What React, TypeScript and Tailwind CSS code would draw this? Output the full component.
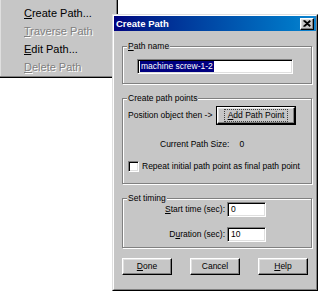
import React from "react"

const raised =
  "border border-t-white border-l-white border-r-black border-b-black shadow-[inset_-1px_-1px_0_#808080,inset_1px_1px_0_#dfdfdf]"
const sunken =
  "border border-t-[#808080] border-l-[#808080] border-r-white border-b-white shadow-[inset_1px_1px_0_#000,inset_-1px_-1px_0_#dfdfdf]"
const etched =
  "relative border border-[#808080] shadow-[inset_1px_1px_0_#fff,1px_1px_0_#fff]"

const MenuItem = ({ hot, rest, disabled }: { hot: string; rest: string; disabled?: boolean }) => (
  <div
    className={
      "h-[18px] pl-[24px] flex items-center text-[11px] leading-none " +
      (disabled ? "text-[#808080] [text-shadow:1px_1px_0_#fff]" : "text-black")
    }
  >
    <span>
      <u className="underline-offset-1">{hot}</u>
      {rest}
    </span>
  </div>
)

const Group = ({
  label,
  className,
  children,
}: {
  label: React.ReactNode
  className: string
  children: React.ReactNode
}) => (
  <div className={etched + " ml-[8px] w-[190px] " + className}>
    <span className="absolute left-[4px] top-[-6px] bg-[#c6c6c6] px-[1px] text-[8.5px] leading-[11px]">
      {label}
    </span>
    {children}
  </div>
)

const Button = ({ children, w }: { children: React.ReactNode; w: string }) => (
  <div className={raised + " h-[17px] flex items-center justify-center text-[8.5px] leading-none bg-[#c6c6c6] " + w}>
    {children}
  </div>
)

export default function App() {
  return (
    <div className="relative w-[318px] h-[291px] bg-white overflow-hidden font-['Liberation_Sans',Arial,sans-serif] text-black">
      {/* popup menu */}
      <div className="absolute left-0 top-0 w-[118px] h-[78px] bg-[#c6c6c6] border-r border-b border-r-black border-b-black shadow-[inset_-1px_-1px_0_#808080,inset_1px_0_0_#dfdfdf] pt-[4px]">
        <MenuItem hot="C" rest="reate Path..." />
        <MenuItem hot="T" rest="raverse Path" disabled />
        <MenuItem hot="E" rest="dit Path..." />
        <MenuItem hot="D" rest="elete Path" disabled />
      </div>

      {/* dialog */}
      <div className="absolute left-[112px] top-[14px] w-[206px] h-[277px] border border-t-[#dfdfdf] border-l-[#dfdfdf] border-r-black border-b-black">
        <div className="h-full bg-[#c6c6c6] border border-t-white border-l-white border-r-[#808080] border-b-[#808080]">
          <div className="h-[15px] flex items-center justify-between pl-[2px] pr-[2px] bg-linear-to-r from-[#000080] to-[#1084d0]">
            <span className="text-white font-bold text-[9.5px] leading-none">Create Path</span>
            <div className={raised + " w-[14px] h-[12px] bg-[#c6c6c6] flex items-center justify-center"}>
              <svg width="8" height="7" viewBox="0 0 8 7">
                <path d="M0.5 0.5 L7 6.5 M1.5 0.5 L7.5 6 M7 0.5 L0.5 6.5 M7.5 1 L1.5 6.5" stroke="#000" strokeWidth="1.1" />
              </svg>
            </div>
          </div>

          <Group
            className="mt-[15px] h-[38px] pt-[12px] pl-[14px]"
            label={
              <>
                <u>P</u>ath name
              </>
            }
          >
            <div className={sunken + " w-[156px] h-[15px] bg-white flex items-center pl-[2px]"}>
              <span className="bg-[#000080] text-white text-[8.5px] leading-[11px] px-[1px]">machine screw-1-2</span>
            </div>
          </Group>

          <Group className="mt-[14px] h-[86px] pt-[7px] pl-[5px]" label="Create path points">
            <div className="flex items-center">
              <span className="w-[88px] text-[8.5px] leading-none whitespace-nowrap">Position object then -&gt;</span>
              {/* default button: black frame + focus rect */}
              <div className="border border-black">
                <Button w="w-[78px]">
                  <span className="border border-dotted border-[#404040] px-[3px] py-[1px]">
                    <u>A</u>dd Path Point
                  </span>
                </Button>
              </div>
            </div>
            <div className="mt-[14px] ml-[32px] flex text-[8.5px] leading-[11px]">
              <span>Current Path Size:</span>
              <span className="ml-[10px]">0</span>
            </div>
            <div className="mt-[11px] flex items-center">
              <div className={sunken + " w-[11px] h-[11px] bg-white"} />
              <span className="ml-[3px] text-[8.5px] leading-none whitespace-nowrap">
                Repeat initial path point as final path point
              </span>
            </div>
          </Group>

          <Group className="mt-[14px] h-[50px] pt-[3px]" label="Set timing">
            <div className="flex items-center">
              <span className="w-[104px] pr-[2px] text-right text-[8.5px] leading-none">
                <u>S</u>tart time (sec):
              </span>
              <div className={sunken + " w-[39px] h-[15px] bg-white flex items-center pl-[3px] text-[8.5px] leading-none"}>0</div>
            </div>
            <div className="mt-[10px] flex items-center">
              <span className="w-[104px] pr-[2px] text-right text-[8.5px] leading-none">
                D<u>u</u>ration (sec):
              </span>
              <div className={sunken + " w-[39px] h-[15px] bg-white flex items-center pl-[3px] text-[8.5px] leading-none"}>10</div>
            </div>
          </Group>

          <div className="mt-[10px] ml-[8px] flex gap-[18px]">
            <Button w="w-[50px]">
              <span>
                <u>D</u>one
              </span>
            </Button>
            <Button w="w-[50px]">Cancel</Button>
            <Button w="w-[50px]">
              <span>
                <u>H</u>elp
              </span>
            </Button>
          </div>
        </div>
      </div>
    </div>
  )
}
